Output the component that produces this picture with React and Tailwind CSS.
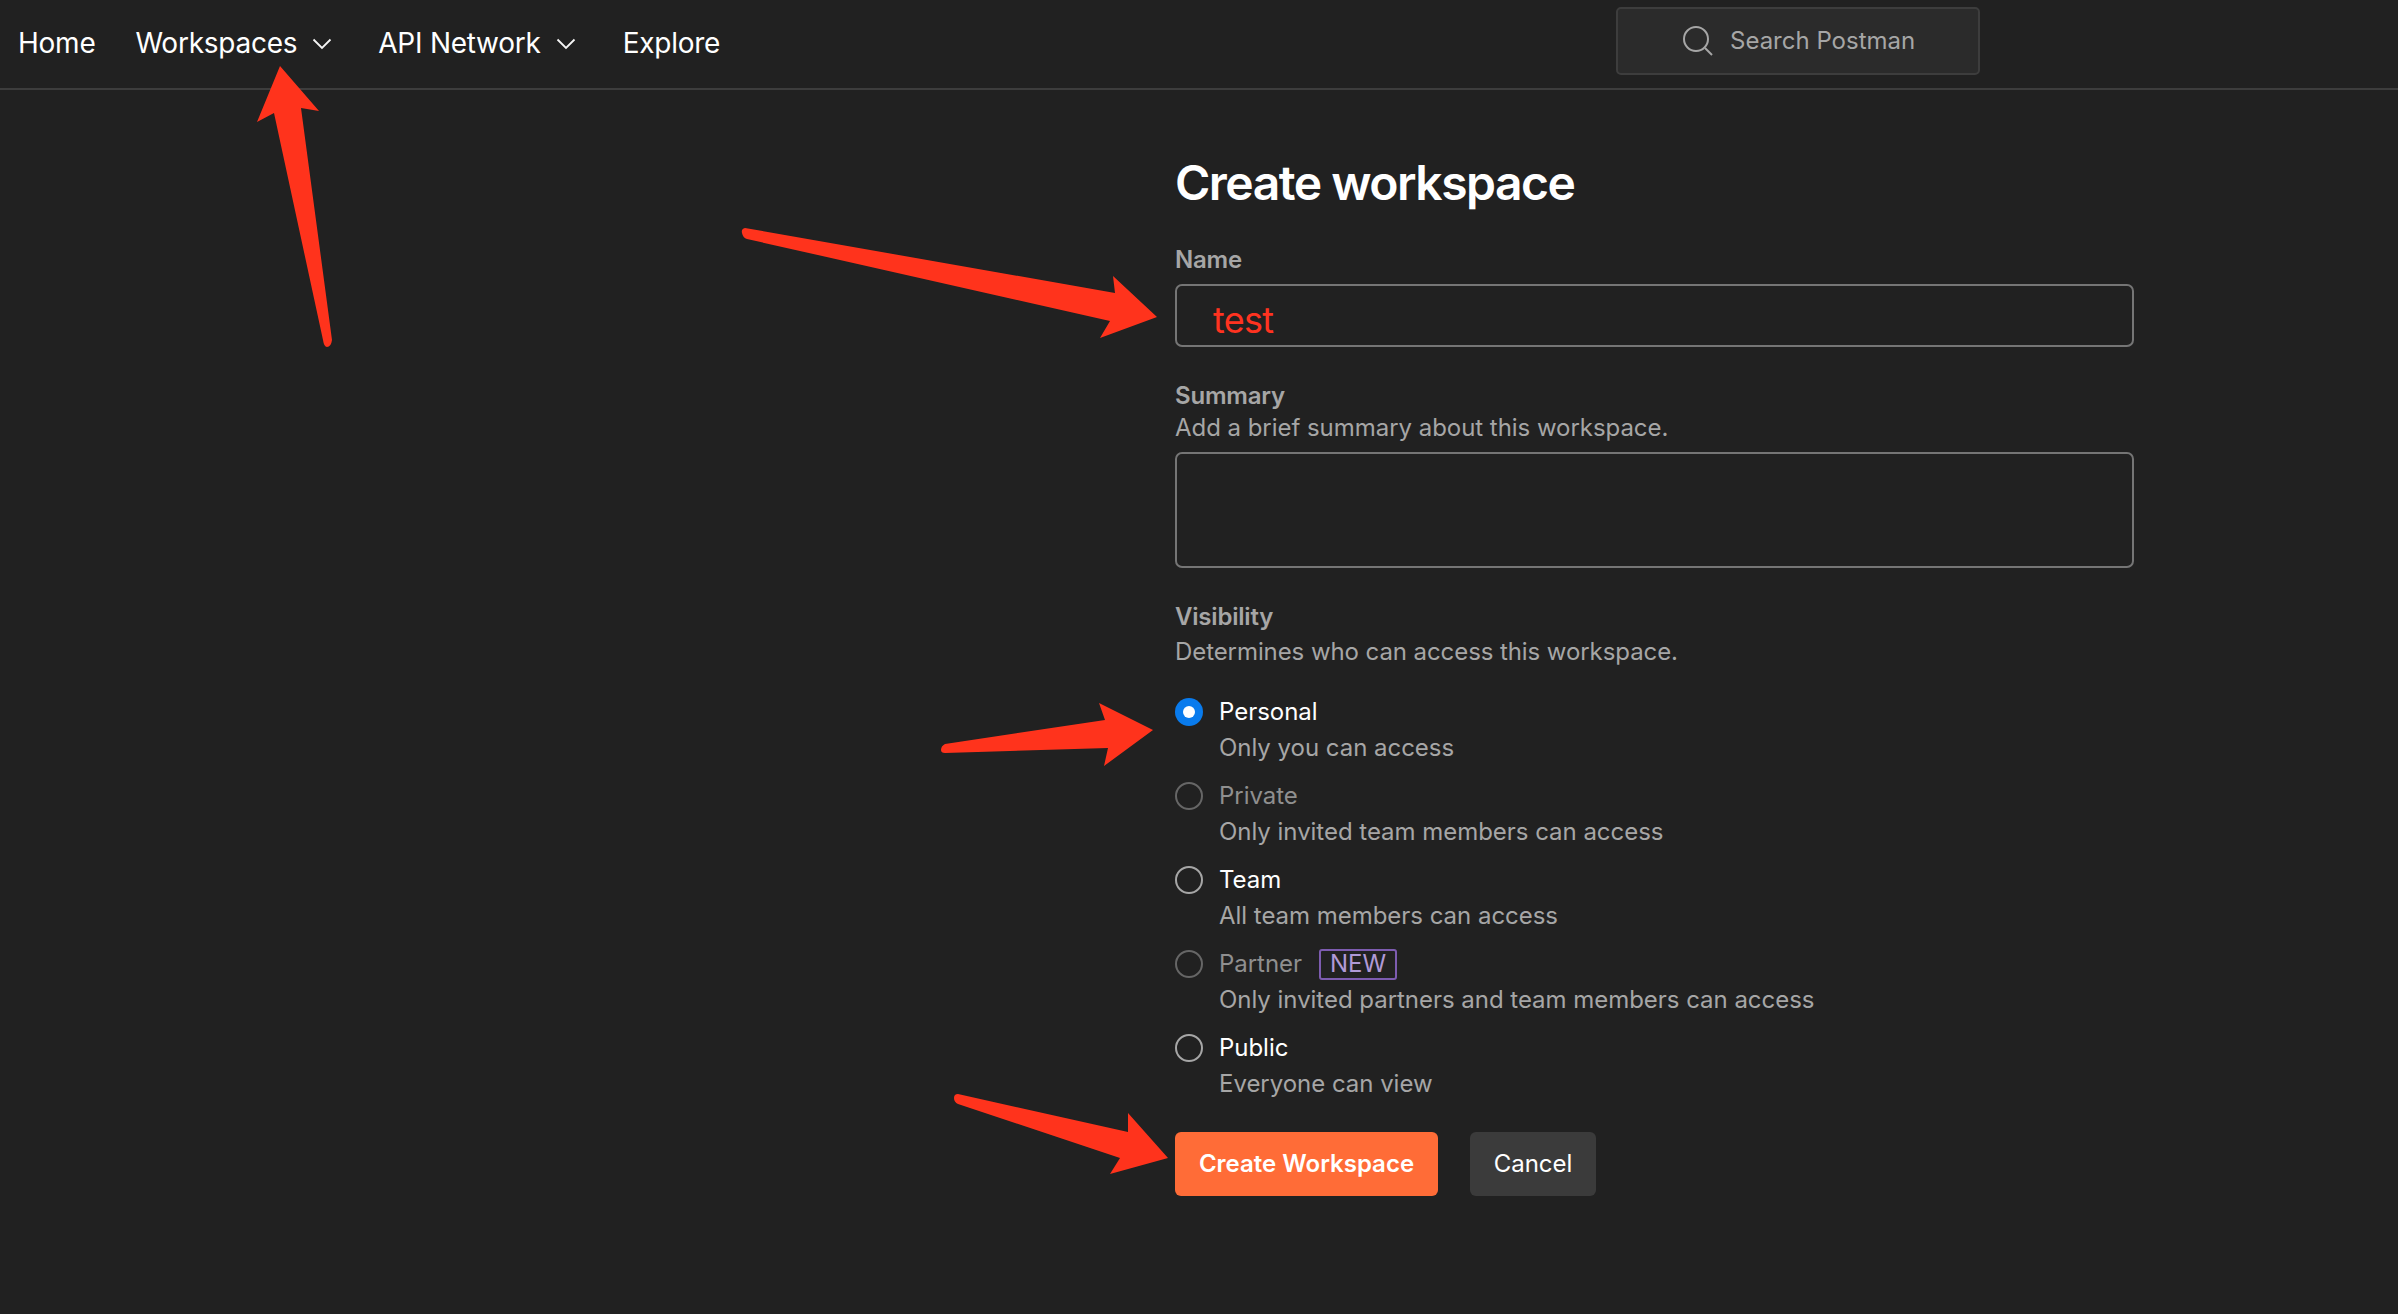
import React from "react";

const FONT = "font-['Inter','Liberation_Sans',sans-serif]";

function Chevron({ className }) {
  return (
    <svg className={className} width="20" height="12" viewBox="0 0 20 12" fill="none" stroke="#f5f5f5" strokeWidth="1.8">
      <path d="M1.5 1.5 L10 10 L18.5 1.5" />
    </svg>
  );
}

function Radio({ label, desc, state, badge }) {
  const labelColor = state === "disabled" ? "text-[#8f8f8f]" : "text-white";
  return (
    <div className="flex h-[84px] items-start">
      <div className="flex h-[28px] w-[44px] items-center">
        {state === "checked" ? (
          <div className="flex h-[28px] w-[28px] items-center justify-center rounded-full bg-[#097bed]">
            <div className="h-[12px] w-[12px] rounded-full bg-white" />
          </div>
        ) : (
          <div className={`h-[28px] w-[28px] rounded-full border-2 ${state === "disabled" ? "border-[#666666]" : "border-[#a6a6a6]"}`} />
        )}
      </div>
      <div className="flex flex-col tracking-[-0.03px]">
        <div className="flex h-[28px] items-center">
          <span className={`text-[24px] leading-[28px] ${labelColor}`}>{label}</span>
          {badge && (
            <span className="ml-[17px] flex h-[31px] w-[78px] items-center justify-center rounded-[3px] border-2 border-[#7d5cb0] text-[24px] text-[#b09ad6]">
              {badge}
            </span>
          )}
        </div>
        <span className="mt-[8px] text-[24px] leading-[28px] text-[#a6a6a6]">{desc}</span>
      </div>
    </div>
  );
}

export default function App() {
  return (
    <div className={`relative h-[1314px] w-full overflow-hidden bg-[#212121] ${FONT}`}>
      <header className="relative flex h-[90px] items-center border-b-2 border-[#3d3d3d] pb-[3px] pl-[18px] text-[28px] tracking-[-0.25px] text-white">
        <span>Home</span>
        <span className="ml-[40px]">Workspaces</span>
        <Chevron className="ml-[15px] mt-[2px]" />
        <span className="ml-[46px]">API Network</span>
        <Chevron className="ml-[15px] mt-[2px]" />
        <span className="ml-[47px]">Explore</span>
        <div className="absolute left-[1616px] top-[7px] flex h-[68px] w-[364px] items-center rounded-[5px] border-2 border-[#3d3d3d] bg-[#2b2b2b] pl-[64px] text-[24px] tracking-normal text-[#a6a6a6]">
          <svg width="32" height="32" viewBox="0 0 32 32" fill="none" stroke="#a6a6a6" strokeWidth="2">
            <circle cx="14" cy="14" r="12" />
            <path d="M23 23 L30 30" />
          </svg>
          <span className="ml-[16px]">Search Postman</span>
        </div>
      </header>

      <main className="ml-[1175px] w-[959px] pt-[60px]">
        <h1 className="text-[48px] font-semibold leading-[66px] tracking-[-1.5px] text-white">Create workspace</h1>

        <div className="mt-[30px] text-[24px] font-semibold leading-[28px] tracking-[-0.2px] text-[#a6a6a6]">Name</div>
        <div className="mt-[10px] flex h-[63px] items-center rounded-[7px] border-2 border-[#757575] pl-[36px] pt-[8px] text-[36px] tracking-[-0.7px] text-[#ff3320]">
          test
        </div>

        <div className="mt-[35px] text-[24px] font-semibold leading-[28px] tracking-[-0.2px] text-[#a6a6a6]">Summary</div>
        <div className="mt-[4px] text-[24px] leading-[28px] tracking-[-0.04px] text-[#a6a6a6]">Add a brief summary about this workspace.</div>
        <div className="mt-[10px] h-[116px] rounded-[7px] border-2 border-[#757575]" />

        <div className="mt-[35px] text-[24px] font-semibold leading-[28px] tracking-[-0.2px] text-[#a6a6a6]">Visibility</div>
        <div className="mt-[7px] text-[24px] leading-[28px] tracking-[-0.08px] text-[#a6a6a6]">Determines who can access this workspace.</div>

        <div className="mt-[32px]">
          <Radio label="Personal" desc="Only you can access" state="checked" />
          <Radio label="Private" desc="Only invited team members can access" state="disabled" />
          <Radio label="Team" desc="All team members can access" />
          <Radio label="Partner" desc="Only invited partners and team members can access" state="disabled" badge="NEW" />
          <Radio label="Public" desc="Everyone can view" />
        </div>

        <div className="mt-[14px] flex gap-[32px]">
          <button className="flex h-[64px] w-[263px] items-center justify-center rounded-[6px] bg-[#ff6c37] text-[24px] font-semibold text-white">
            Create Workspace
          </button>
          <button className="flex h-[64px] w-[126px] items-center justify-center rounded-[6px] bg-[#3b3b3b] text-[24px] text-white">
            Cancel
          </button>
        </div>
      </main>

      <svg className="pointer-events-none absolute left-0 top-0" width="2398" height="1314" viewBox="0 0 2398 1314" fill="#ff331c">
        <path d="M280 66 L319 111 L301 108 L332 340 Q331 347 327 347 Q324 347 323 340 L274 113 L257 122 Z" />
        <path d="M1157 317 L1113 276 L1115 293 L745 228 Q741 229 742 233 Q743 238 747 239 L1110 321 L1100 338 Z" />
        <path d="M1153 730 L1099 703 L1105 720 L945 744 Q941 746 941 750 Q941 753 945 753 L1108 748 L1104 766 Z" />
        <path d="M1168 1158 L1128 1113 L1128 1132 L958 1094 Q954 1094 954 1098 Q954 1102 958 1104 L1120 1158 L1110 1174 Z" />
      </svg>
    </div>
  );
}
